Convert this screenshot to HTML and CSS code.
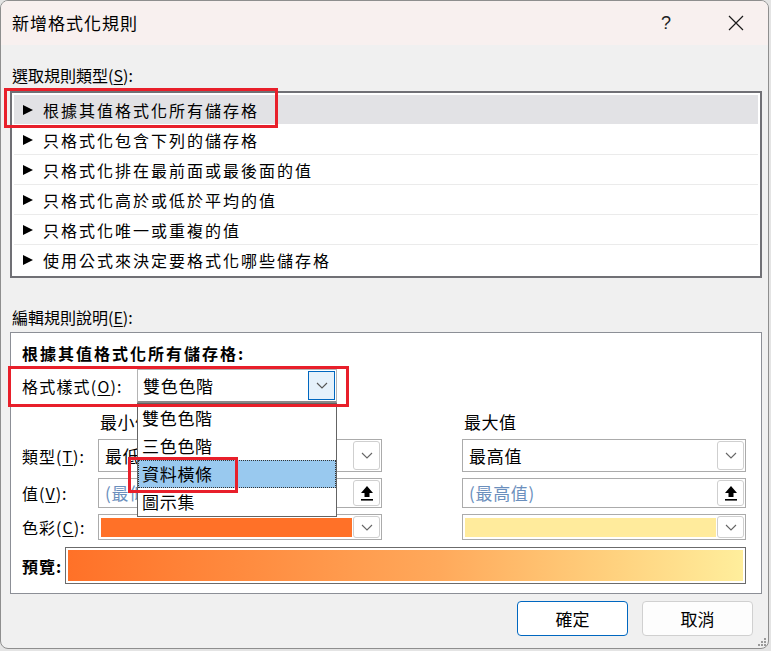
FILE: index.html
```html
<!DOCTYPE html>
<html lang="zh-Hant">
<head>
    <meta charset="UTF-8">
    <title>新增格式化規則</title>
    <link rel="stylesheet" href="styles.css">
</head>
<body>
    <div class="dialog">
        <div class="titlebar">
            <div class="title">新增格式化規則</div>
            <div class="help">?</div>
            <svg class="close" width="16" height="16" viewBox="0 0 16 16">
                <path d="M1 1 L15 15 M15 1 L1 15" stroke="#1a1a1a" stroke-width="1.2" fill="none"/>
            </svg>
        </div>

        <div class="content">
            <div class="label top-label">選取規則類型(<u>S</u>):</div>
            <div class="rule-list">
                <div class="rule selected"><svg class="arrow" width="12" height="12" viewBox="0 0 12 12"><path d="M1 1 L11 6 L1 11 Z" fill="#000"/></svg>根據其值格式化所有儲存格</div>
                <div class="rule"><svg class="arrow" width="12" height="12" viewBox="0 0 12 12"><path d="M1 1 L11 6 L1 11 Z" fill="#000"/></svg>只格式化包含下列的儲存格</div>
                <div class="rule"><svg class="arrow" width="12" height="12" viewBox="0 0 12 12"><path d="M1 1 L11 6 L1 11 Z" fill="#000"/></svg>只格式化排在最前面或最後面的值</div>
                <div class="rule"><svg class="arrow" width="12" height="12" viewBox="0 0 12 12"><path d="M1 1 L11 6 L1 11 Z" fill="#000"/></svg>只格式化高於或低於平均的值</div>
                <div class="rule"><svg class="arrow" width="12" height="12" viewBox="0 0 12 12"><path d="M1 1 L11 6 L1 11 Z" fill="#000"/></svg>只格式化唯一或重複的值</div>
                <div class="rule last"><svg class="arrow" width="12" height="12" viewBox="0 0 12 12"><path d="M1 1 L11 6 L1 11 Z" fill="#000"/></svg>使用公式來決定要格式化哪些儲存格</div>
            </div>

            <div class="label edit-label">編輯規則說明(<u>E</u>):</div>
            <div class="panel">
                <div class="heading">根據其值格式化所有儲存格:</div>

                <div class="style-row">
                    <div class="label style-label">格式樣式(<u>O</u>):</div>
                    <div class="combo main-combo">
                        <span class="combo-text">雙色色階</span>
                        <div class="combo-btn focus">
                            <svg width="12" height="7" viewBox="0 0 12 7"><path d="M1 1 L6 6 L11 1" stroke="#555" stroke-width="1.1" fill="none"/></svg>
                        </div>
                    </div>
                </div>

                <div class="grid">
                    <div></div>
                    <div class="col-head">最小值</div>
                    <div></div>
                    <div class="col-head">最大值</div>

                    <div class="label row-label">類型(<u>T</u>):</div>
                    <div class="field">
                        <span class="combo-text">最低值</span>
                        <div class="field-btn">
                            <svg width="12" height="7" viewBox="0 0 12 7"><path d="M1 1 L6 6 L11 1" stroke="#666" stroke-width="1.1" fill="none"/></svg>
                        </div>
                    </div>
                    <div></div>
                    <div class="field">
                        <span class="combo-text">最高值</span>
                        <div class="field-btn">
                            <svg width="12" height="7" viewBox="0 0 12 7"><path d="M1 1 L6 6 L11 1" stroke="#666" stroke-width="1.1" fill="none"/></svg>
                        </div>
                    </div>

                    <div class="label row-label">值(<u>V</u>):</div>
                    <div class="field">
                        <span class="combo-text placeholder">(最低值)</span>
                        <div class="field-btn">
                            <svg width="14" height="16" viewBox="0 0 14 16"><path d="M7 1 L13 8 H9.5 V12 H4.5 V8 H1 Z" fill="#000"/><rect x="1" y="14" width="12" height="1.6" fill="#000"/></svg>
                        </div>
                    </div>
                    <div></div>
                    <div class="field">
                        <span class="combo-text placeholder">(最高值)</span>
                        <div class="field-btn">
                            <svg width="14" height="16" viewBox="0 0 14 16"><path d="M7 1 L13 8 H9.5 V12 H4.5 V8 H1 Z" fill="#000"/><rect x="1" y="14" width="12" height="1.6" fill="#000"/></svg>
                        </div>
                    </div>

                    <div class="label row-label">色彩(<u>C</u>):</div>
                    <div class="field">
                        <div class="swatch min-color"></div>
                        <div class="field-btn">
                            <svg width="12" height="7" viewBox="0 0 12 7"><path d="M1 1 L6 6 L11 1" stroke="#666" stroke-width="1.1" fill="none"/></svg>
                        </div>
                    </div>
                    <div></div>
                    <div class="field">
                        <div class="swatch max-color"></div>
                        <div class="field-btn">
                            <svg width="12" height="7" viewBox="0 0 12 7"><path d="M1 1 L6 6 L11 1" stroke="#666" stroke-width="1.1" fill="none"/></svg>
                        </div>
                    </div>
                </div>

                <div class="preview-row">
                    <div class="preview-label">預覽:</div>
                    <div class="preview"><div class="preview-bar"></div></div>
                </div>

                <div class="dropdown">
                    <div class="option">雙色色階</div>
                    <div class="option">三色色階</div>
                    <div class="option active">資料橫條</div>
                    <div class="option">圖示集</div>
                </div>
            </div>

            <div class="buttons">
                <button class="btn default">確定</button>
                <button class="btn">取消</button>
            </div>
        </div>

        <div class="mark mark-rule"></div>
        <div class="mark mark-style"></div>
        <div class="mark mark-option"></div>
        <svg class="grip" width="10" height="10" viewBox="0 0 10 10">
            <rect x="7" y="1" width="2" height="2" fill="#9a9a9a"/>
            <rect x="4" y="4" width="2" height="2" fill="#9a9a9a"/>
            <rect x="7" y="4" width="2" height="2" fill="#9a9a9a"/>
            <rect x="1" y="7" width="2" height="2" fill="#9a9a9a"/>
            <rect x="4" y="7" width="2" height="2" fill="#9a9a9a"/>
            <rect x="7" y="7" width="2" height="2" fill="#9a9a9a"/>
        </svg>
    </div>
</body>
</html>
```

FILE: styles.css
```css
* {
    box-sizing: border-box;
}

body {
    margin: 0;
    background-color: #e4e4e4;
    font-family: "Noto Sans CJK TC", "Noto Sans", sans-serif;
    font-size: 16px;
    color: #000;
}

u {
    text-decoration: underline;
    text-underline-offset: 2px;
}

.dialog {
    position: relative;
    width: 769px;
    height: 649px;
    border: 1px solid #8e8e8e;
    border-radius: 8px;
    background-color: #f0f0f0;
    overflow: hidden;
}

.titlebar {
    height: 44px;
    background-color: #f8f0ef;
    display: flex;
    align-items: center;
    padding-left: 11px;
}

.title {
    font-size: 17px;
    letter-spacing: 1px;
    line-height: 20px;
    flex: 1;
}

.help {
    font-family: "Liberation Sans", sans-serif;
    font-size: 18px;
    color: #222;
    margin-right: 57px;
}

.close {
    margin-right: 24px;
}

.content {
    padding: 0 6px 0 9px;
}

.label {
    line-height: 22px;
    height: 22px;
    white-space: nowrap;
}

.top-label {
    margin-top: 19px;
    padding-left: 2px;
}

.rule-list {
    margin-top: 5px;
    border: 2px solid #707075;
    background-color: #fff;
    padding: 2px 2px 1px 2px;
}

.rule {
    height: 30px;
    display: flex;
    align-items: center;
    font-size: 16px;
    letter-spacing: 2px;
    border-bottom: 1px solid #ebebeb;
    white-space: nowrap;
}

.rule.selected {
    background-color: #e2e2e5;
    border-bottom-color: #fff;
}

.rule.last {
    border-bottom: none;
}

.arrow {
    margin-left: 8px;
    margin-right: 9px;
}

.edit-label {
    margin-top: 28px;
    padding-left: 2px;
}

.panel {
    position: relative;
    margin-top: 4px;
    height: 262px;
    border: 1px solid #8c8f96;
    background-color: #fff;
    padding: 9px 13px 0 11px;
}

.heading {
    font-weight: bold;
    letter-spacing: 2px;
    line-height: 22px;
    height: 22px;
}

.style-row {
    display: flex;
    align-items: center;
    margin-top: 5px;
    height: 34px;
}

.style-label {
    width: 115px;
    letter-spacing: 1.2px;
}

.combo {
    display: flex;
    align-items: center;
    background-color: #fff;
}

.main-combo {
    width: 200px;
    height: 34px;
    border: 1px solid #b4b4b4;
    border-bottom: 2px solid #8a8a8a;
}

.combo-text {
    flex: 1;
    padding-left: 5px;
    font-size: 17px;
    letter-spacing: 0.7px;
    line-height: 24px;
    white-space: nowrap;
}

.combo-btn {
    width: 27px;
    height: 29px;
    margin-right: 1px;
    display: flex;
    align-items: center;
    justify-content: center;
}

.combo-btn.focus {
    border: 1px solid #0067c0;
    background-color: #e5f1fb;
}

.grid {
    margin-top: 8px;
    display: grid;
    grid-template-columns: 76px 284px 80px 284px;
    grid-template-rows: 22px 33px 30px 26px;
    row-gap: 6px;
}

.col-head {
    line-height: 22px;
    padding-left: 2px;
    font-size: 17px;
    letter-spacing: 0.5px;
    white-space: nowrap;
}

.row-label {
    align-self: center;
    letter-spacing: 1px;
}

.field {
    display: flex;
    align-items: center;
    border: 1px solid #ababab;
    background-color: #fff;
    padding: 1px;
}

.field-btn {
    width: 27px;
    height: 100%;
    border: 1px solid #cfcfcf;
    border-radius: 3px;
    background-color: #fff;
    display: flex;
    align-items: center;
    justify-content: center;
}

.placeholder {
    color: #6b8fbd;
}

.swatch {
    flex: 1;
    height: 19px;
    margin: 0 1px;
}

.min-color {
    background-color: #ff7128;
}

.max-color {
    background-color: #ffeb9c;
}

.preview-row {
    display: flex;
    align-items: center;
    margin-top: 7px;
    height: 37px;
}

.preview-label {
    width: 43px;
    font-weight: bold;
    letter-spacing: 1px;
    line-height: 22px;
}

.preview {
    width: 681px;
    height: 37px;
    border: 1px solid #6b6b6b;
    padding: 2px;
    background-color: #fff;
}

.preview-bar {
    height: 100%;
    background: linear-gradient(to right, #ff7128 0%, #ff8a3e 25%, #ffa95b 55%, #ffd07d 80%, #ffee9c 100%);
}

.dropdown {
    position: absolute;
    top: 70px;
    left: 126px;
    width: 200px;
    height: 114px;
    border: 1px solid #646464;
    background-color: #fff;
    z-index: 5;
}

.option {
    height: 28px;
    line-height: 28px;
    padding-left: 4px;
    font-size: 17px;
    letter-spacing: 0.7px;
}

.option.active {
    background-color: #99c9ef;
    border: 1px dotted #333;
    line-height: 26px;
    padding-left: 3px;
}

.buttons {
    display: flex;
    justify-content: flex-end;
    gap: 14px;
    margin-top: 7px;
    padding-right: 9px;
}

.btn {
    width: 111px;
    height: 35px;
    font-family: "Noto Sans CJK TC", sans-serif;
    font-size: 17px;
    letter-spacing: 0;
    background-color: #fdfdfd;
    border: 1px solid #d0d0d0;
    border-radius: 4px;
    color: #000;
    padding: 0;
}

.btn.default {
    background-color: #fff;
    border-color: #0067c0;
}

.mark {
    position: absolute;
    border: 3px solid #e81f2a;
    z-index: 10;
}

.mark-rule {
    left: 3px;
    top: 87px;
    width: 274px;
    height: 40px;
}

.mark-style {
    left: 7px;
    top: 365px;
    width: 341px;
    height: 41px;
}

.mark-option {
    left: 127px;
    top: 456px;
    width: 110px;
    height: 36px;
}

.grip {
    position: absolute;
    right: 1px;
    bottom: 1px;
}
```
